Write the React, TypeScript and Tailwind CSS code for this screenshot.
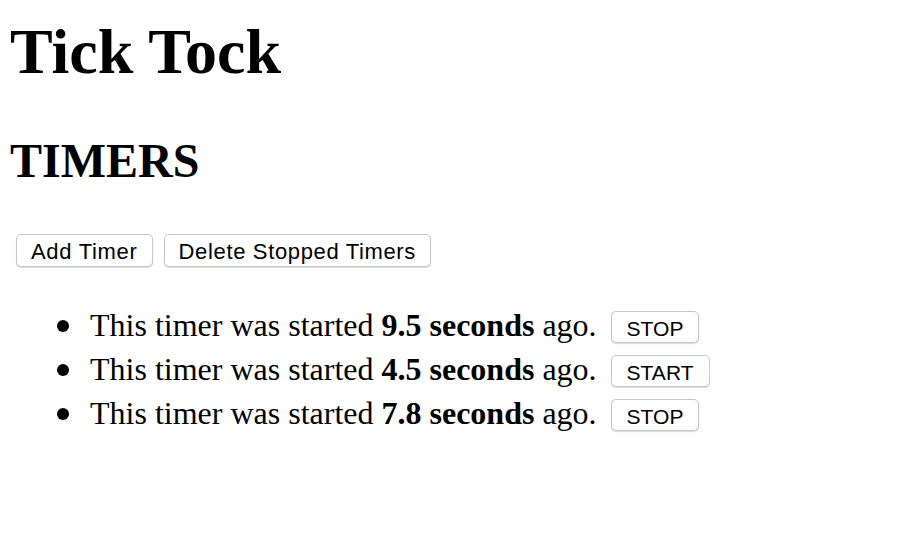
import React, { useState } from "react";

interface ITimer {
  id: number;
  seconds: string;
  running: boolean;
}

const initialTimers: ITimer[] = [
  { id: 1, seconds: "9.5", running: true },
  { id: 2, seconds: "4.5", running: false },
  { id: 3, seconds: "7.8", running: true },
];

const App = () => {
  const [timers, setTimers] = useState<ITimer[]>(initialTimers);

  const addTimer = () =>
    setTimers((t) => [...t, { id: Date.now(), seconds: "0.0", running: true }]);

  const deleteStopped = () => setTimers((t) => t.filter((x) => x.running));

  const toggle = (id: number) =>
    setTimers((t) =>
      t.map((x) => (x.id === id ? { ...x, running: !x.running } : x))
    );

  return (
    <div className="min-h-screen bg-white pl-[10px] pt-[16px] font-['Liberation_Serif',serif] text-black">
      <h1 className="text-[64px] leading-[72px] font-bold">Tick Tock</h1>
      <h2 className="mt-[45px] text-[48px] leading-[56px] font-bold">TIMERS</h2>

      <div className="mt-[45px] flex gap-[11px] pl-[6px]">
        <button
          onClick={addTimer}
          className="h-[33px] rounded-[5px] border border-[#c6c6c6] bg-white px-[14px] pt-[5px] pb-[2px] font-['Liberation_Sans',sans-serif] text-[22px] leading-[24px] tracking-[0.7px] shadow-[0_1px_1px_rgba(0,0,0,0.15)]"
        >
          Add Timer
        </button>
        <button
          onClick={deleteStopped}
          className="h-[33px] rounded-[5px] border border-[#c6c6c6] bg-white px-[14px] pt-[5px] pb-[2px] font-['Liberation_Sans',sans-serif] text-[22px] leading-[24px] tracking-[0.65px] shadow-[0_1px_1px_rgba(0,0,0,0.15)]"
        >
          Delete Stopped Timers
        </button>
      </div>

      <ul className="mt-[36px]">
        {timers.map((timer) => (
          <li
            key={timer.id}
            className="flex h-[44px] items-baseline text-[32px] leading-[44px]"
          >
            <span className="mt-[17px] ml-[47px] mr-[21px] h-[12px] w-[12px] self-start rounded-full bg-black" />
            <span>
              This timer was started <b>{timer.seconds} seconds</b> ago.
            </span>
            <button
              onClick={() => toggle(timer.id)}
              className="ml-[14px] h-[32px] rounded-[5px] border border-[#c6c6c6] bg-white px-[15px] pt-[6px] pb-[2px] font-['Liberation_Sans',sans-serif] text-[21px] leading-[22px] shadow-[0_1px_1px_rgba(0,0,0,0.15)]"
            >
              {timer.running ? "STOP" : "START"}
            </button>
          </li>
        ))}
      </ul>
    </div>
  );
};

export default App;
